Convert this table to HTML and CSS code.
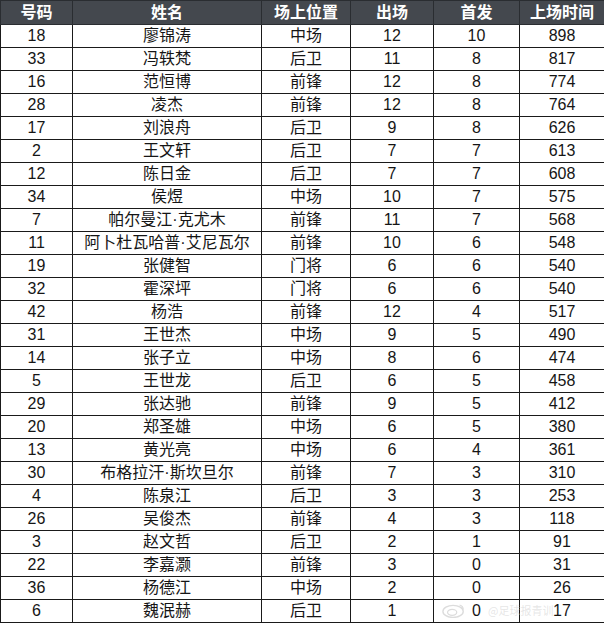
FILE: index.html
```html
<!DOCTYPE html>
<html lang="zh">
<head>
<meta charset="utf-8">
<link rel="stylesheet" href="styles.css">
</head>
<body>
<div class="wrap">
<table class="stats">
<colgroup>
<col class="c1"><col class="c2"><col class="c3"><col class="c4"><col class="c5"><col class="c6">
</colgroup>
<thead>
<tr><th>号码</th><th>姓名</th><th>场上位置</th><th>出场</th><th>首发</th><th>上场时间</th></tr>
</thead>
<tbody>
<tr><td>18</td><td>廖锦涛</td><td>中场</td><td>12</td><td>10</td><td>898</td></tr>
<tr><td>33</td><td>冯轶梵</td><td>后卫</td><td>11</td><td>8</td><td>817</td></tr>
<tr><td>16</td><td>范恒博</td><td>前锋</td><td>12</td><td>8</td><td>774</td></tr>
<tr><td>28</td><td>凌杰</td><td>前锋</td><td>12</td><td>8</td><td>764</td></tr>
<tr><td>17</td><td>刘浪舟</td><td>后卫</td><td>9</td><td>8</td><td>626</td></tr>
<tr><td>2</td><td>王文轩</td><td>后卫</td><td>7</td><td>7</td><td>613</td></tr>
<tr><td>12</td><td>陈日金</td><td>后卫</td><td>7</td><td>7</td><td>608</td></tr>
<tr><td>34</td><td>侯煜</td><td>中场</td><td>10</td><td>7</td><td>575</td></tr>
<tr><td>7</td><td>帕尔曼江·克尤木</td><td>前锋</td><td>11</td><td>7</td><td>568</td></tr>
<tr><td>11</td><td>阿卜杜瓦哈普·艾尼瓦尔</td><td>前锋</td><td>10</td><td>6</td><td>548</td></tr>
<tr><td>19</td><td>张健智</td><td>门将</td><td>6</td><td>6</td><td>540</td></tr>
<tr><td>32</td><td>霍深坪</td><td>门将</td><td>6</td><td>6</td><td>540</td></tr>
<tr><td>42</td><td>杨浩</td><td>前锋</td><td>12</td><td>4</td><td>517</td></tr>
<tr><td>31</td><td>王世杰</td><td>中场</td><td>9</td><td>5</td><td>490</td></tr>
<tr><td>14</td><td>张子立</td><td>中场</td><td>8</td><td>6</td><td>474</td></tr>
<tr><td>5</td><td>王世龙</td><td>后卫</td><td>6</td><td>5</td><td>458</td></tr>
<tr><td>29</td><td>张达驰</td><td>前锋</td><td>9</td><td>5</td><td>412</td></tr>
<tr><td>20</td><td>郑圣雄</td><td>中场</td><td>6</td><td>5</td><td>380</td></tr>
<tr><td>13</td><td>黄光亮</td><td>中场</td><td>6</td><td>4</td><td>361</td></tr>
<tr><td>30</td><td>布格拉汗·斯坎旦尔</td><td>前锋</td><td>7</td><td>3</td><td>310</td></tr>
<tr><td>4</td><td>陈泉江</td><td>后卫</td><td>3</td><td>3</td><td>253</td></tr>
<tr><td>26</td><td>吴俊杰</td><td>前锋</td><td>4</td><td>3</td><td>118</td></tr>
<tr><td>3</td><td>赵文哲</td><td>后卫</td><td>2</td><td>1</td><td>91</td></tr>
<tr><td>22</td><td>李嘉灏</td><td>前锋</td><td>3</td><td>0</td><td>31</td></tr>
<tr><td>36</td><td>杨德江</td><td>中场</td><td>2</td><td>0</td><td>26</td></tr>
<tr><td>6</td><td>魏泯赫</td><td>后卫</td><td>1</td><td>0</td><td>17</td></tr>
</tbody>
</table>
<svg class="wb" width="24" height="15" viewBox="0 0 26 16"><ellipse cx="12" cy="9" rx="11" ry="6.5" fill="none" stroke="#dcdcdc" stroke-width="1.5"/><ellipse cx="11" cy="10" rx="5" ry="3.2" fill="none" stroke="#dcdcdc" stroke-width="1.3"/><path d="M19 2 q4 1 4 5" fill="none" stroke="#dcdcdc" stroke-width="1.3"/></svg>
<span class="watermark">@足球报青训</span>
</div>
</body>
</html>
```
FILE: styles.css
```css
html, body {
  margin: 0;
  padding: 0;
  background: #ffffff;
}
.wrap {
  position: relative;
  width: 604px;
  height: 624px;
}
.stats {
  border-collapse: collapse;
  table-layout: fixed;
  width: 604px;
  font-family: "Liberation Sans", "Noto Sans CJK SC", sans-serif;
  font-size: 16px;
  color: #151515;
}
.c1 { width: 72px; }
.c2 { width: 189px; }
.c3 { width: 89px; }
.c4 { width: 83px; }
.c5 { width: 86px; }
.c6 { width: 85px; }
.stats th, .stats td {
  border: 1px solid #1a1a1a;
  padding: 0;
  text-align: center;
  white-space: nowrap;
  overflow: hidden;
}
.stats th {
  background: #44484e;
  color: #ffffff;
  font-weight: bold;
  height: 23px;
  line-height: 23px;
  border-color: #2a2d31;
}
.stats td {
  height: 22px;
  line-height: 22px;
}
.wb {
  position: absolute;
  left: 442px;
  top: 603px;
  pointer-events: none;
}
.watermark {
  position: absolute;
  left: 488px;
  top: 603px;
  font-family: "Noto Sans CJK SC", sans-serif;
  font-size: 11px;
  line-height: 15px;
  color: rgba(200, 200, 200, 0.45);
  pointer-events: none;
}
```
